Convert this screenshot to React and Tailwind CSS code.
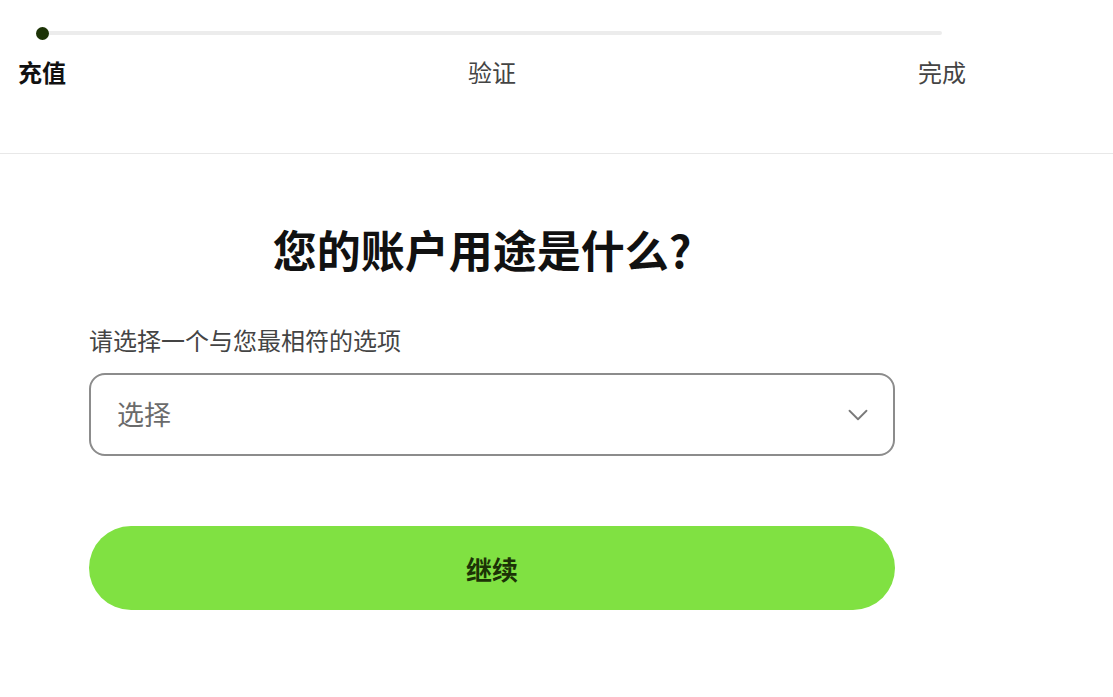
import { ChevronDown } from "lucide-react";

const STEPS = [
    { key: "topup", label: "充值", active: true },
    { key: "verify", label: "验证" },
    { key: "done", label: "完成" },
];

function Stepper() {
    return (
        <div className="relative w-[900px] ml-[42px] pt-[31px] h-[153px]">
            {/* track */}
            <div className="h-[4px] bg-[#ececec] rounded-full" />
            <div className="absolute left-[-6px] top-[27px] w-[13px] h-[13px] rounded-full bg-[#1c3306]" />
            <div className="flex justify-between mt-[23px]">
                {STEPS.map((s) => (
                    <div key={s.key} className="w-0 flex justify-center">
                        <span
                            className={`whitespace-nowrap text-[24px] leading-[28px] ${s.active ? "font-bold text-[#111]" : "text-[#444]"}`}
                        >
                            {s.label}
                        </span>
                    </div>
                ))}
            </div>
        </div>
    );
}

export default function App() {
    return (
        <div
            className="w-[1113px] h-[697px] bg-white overflow-hidden"
            style={{ fontFamily: '"Microsoft YaHei", "Noto Sans CJK SC", "Noto Sans", sans-serif' }}
        >
            <Stepper />
            <div className="border-t border-[#e8e8e8]" />

            <div className="w-[806px] ml-[89px] pt-[67px]">
                <h1 className="text-center text-[44px] leading-[56px] font-bold text-[#111] pr-[20px]">
                    您的账户用途是什么?
                </h1>

                <p className="mt-[47px] text-[24px] leading-[32px] text-[#444]">请选择一个与您最相符的选项</p>

                <button className="mt-[17px] w-full h-[83px] border-2 border-[#8c8c8c] rounded-[16px] flex items-center justify-between pl-[26px] pr-[18px]">
                    <span className="text-[27px] text-[#6b6b6b]">选择</span>
                    <ChevronDown size={34} strokeWidth={1.3} className="text-[#7a7a7a]" />
                </button>

                <button className="mt-[70px] w-full h-[84px] rounded-full bg-[#80e142] text-[26px] font-bold text-[#1c3306]">
                    继续
                </button>
            </div>
        </div>
    );
}
